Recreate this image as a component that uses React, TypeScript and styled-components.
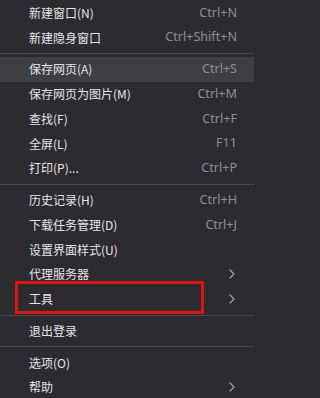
import React from "react";
import styled, { createGlobalStyle } from "styled-components";

const GlobalStyle = createGlobalStyle`
  html, body {
    margin: 0;
    padding: 0;
    background: #2c2c30;
  }
  body {
    font-family: "Noto Sans CJK SC", "Noto Sans", sans-serif;
  }
`;

const Menu = styled.div`
  display: flex;
  flex-direction: column;
  width: 254px;
  height: 398px;
  padding-top: 0.5px;
  box-sizing: border-box;
  background: #2c2c30;
  overflow: hidden;
`;

const Row = styled.div<{ $active?: boolean }>`
  position: relative;
  display: flex;
  align-items: center;
  justify-content: space-between;
  flex: 0 0 auto;
  height: 24.75px;
  padding: 0 17px 0 29px;
  box-sizing: border-box;
  background: ${(p) => (p.$active ? "#3e3e43" : "transparent")};
`;

const Label = styled.span`
  font-size: 12px;
  color: #e4e4e6;
  white-space: nowrap;
  line-height: 1;
`;

const Shortcut = styled.span`
  font-family: "Noto Sans", "Noto Sans CJK SC", sans-serif;
  font-size: 12.6px;
  color: #8e8e92;
  white-space: nowrap;
  line-height: 1;
`;

const Separator = styled.div`
  flex: 0 0 auto;
  height: 1px;
  margin: 3px 0;
  background: #45454a;
`;

const Chevron = styled.svg`
  width: 6px;
  height: 10px;
  margin-right: 2px;
  display: block;
`;

const Annotation = styled.div`
  position: absolute;
  left: 15px;
  width: 189px;
  top: -6px;
  bottom: -2.5px;
  border: 3px solid #dc1414;
  box-sizing: border-box;
  pointer-events: none;
`;

type Item =
  | { kind: "sep" }
  | {
      kind: "item";
      label: string;
      shortcut?: string;
      sub?: boolean;
      active?: boolean;
      marked?: boolean;
    };

const items: Item[] = [
  { kind: "item", label: "新建窗口(N)", shortcut: "Ctrl+N" },
  { kind: "item", label: "新建隐身窗口", shortcut: "Ctrl+Shift+N" },
  { kind: "sep" },
  { kind: "item", label: "保存网页(A)", shortcut: "Ctrl+S", active: true },
  { kind: "item", label: "保存网页为图片(M)", shortcut: "Ctrl+M" },
  { kind: "item", label: "查找(F)", shortcut: "Ctrl+F" },
  { kind: "item", label: "全屏(L)", shortcut: "F11" },
  { kind: "item", label: "打印(P)...", shortcut: "Ctrl+P" },
  { kind: "sep" },
  { kind: "item", label: "历史记录(H)", shortcut: "Ctrl+H" },
  { kind: "item", label: "下载任务管理(D)", shortcut: "Ctrl+J" },
  { kind: "item", label: "设置界面样式(U)" },
  { kind: "item", label: "代理服务器", sub: true },
  { kind: "item", label: "工具", sub: true, marked: true },
  { kind: "sep" },
  { kind: "item", label: "退出登录" },
  { kind: "sep" },
  { kind: "item", label: "选项(O)" },
  { kind: "item", label: "帮助", sub: true },
];

const ChevronIcon = () => (
  <Chevron viewBox="0 0 6 10">
    <path
      d="M1 1 L5 5 L1 9"
      fill="none"
      stroke="#a2a2a6"
      strokeWidth="1.2"
      strokeLinecap="round"
      strokeLinejoin="round"
    />
  </Chevron>
);

export default function App() {
  return (
    <>
      <GlobalStyle />
      <Menu>
        {items.map((it, i) =>
          it.kind === "sep" ? (
            <Separator key={i} />
          ) : (
            <Row key={i} $active={it.active}>
              <Label>{it.label}</Label>
              {it.shortcut && <Shortcut>{it.shortcut}</Shortcut>}
              {it.sub && <ChevronIcon />}
              {it.marked && <Annotation />}
            </Row>
          )
        )}
      </Menu>
    </>
  );
}
